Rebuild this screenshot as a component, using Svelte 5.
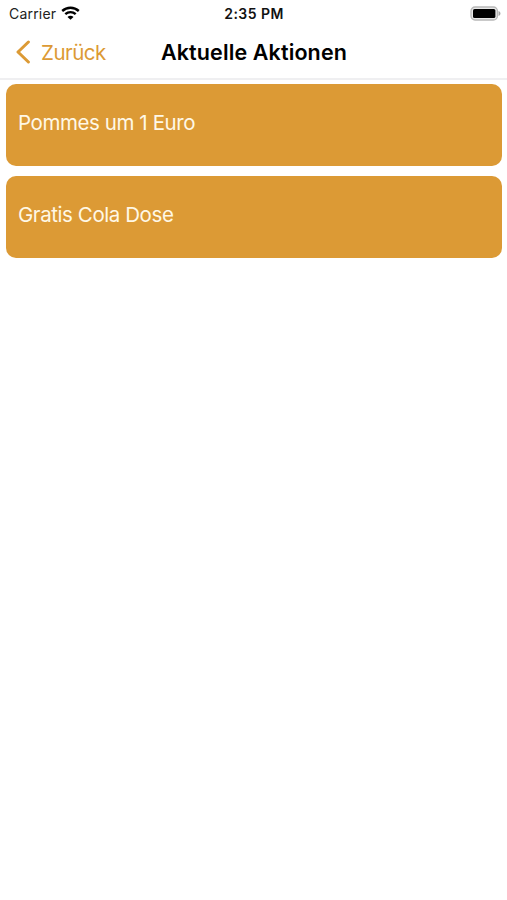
<script>
  export let title = 'Aktuelle Aktionen';
  export let backLabel = 'Zurück';

  let promotions = [
    { id: 1, name: 'Pommes um 1 Euro' },
    { id: 2, name: 'Gratis Cola Dose' }
  ];
</script>

<div class="screen">
  <div class="status-bar">
    <div class="carrier">
      <span>Carrier</span>
      <svg class="wifi" width="19" height="14" viewBox="0 0 19 14" aria-hidden="true">
        <path d="M1.2 5C5.9.7 13.1.7 17.8 5" />
        <path d="M4.3 8.1c3-2.7 7.4-2.7 10.4 0" />
        <path class="dot" d="M9.5 13.8 6.5 10.9c1.6-1.5 4.4-1.5 6 0z" />
      </svg>
    </div>
    <div class="time">2:35 PM</div>
    <svg class="battery" width="31" height="16" viewBox="0 0 31 16" aria-hidden="true">
      <rect x="1" y="1" width="26.4" height="13" rx="4" fill="#e8e8e8" stroke="#b8b8b8" stroke-width="1.3" />
      <rect x="3" y="3" width="22.4" height="9" rx="1.6" fill="#000" />
      <path d="M28.5 5c2.6 1 2.6 4 0 5z" fill="#a5a5a5" />
    </svg>
  </div>

  <header class="nav-bar">
    <button class="back">
      <svg width="16" height="24" viewBox="0 0 16 24" aria-hidden="true">
        <path d="M13.4 2 3 12l10.4 10" />
      </svg>
      <span>{backLabel}</span>
    </button>
    <h1>{title}</h1>
  </header>

  <main class="list">
    {#each promotions as promotion (promotion.id)}
      <div class="card">{promotion.name}</div>
    {/each}
  </main>
</div>

<style>
  :global(body) {
    margin: 0;
    background: #fff;
  }

  .screen {
    height: 900px;
    overflow: hidden;
    background: #fff;
    font-family: Inter, 'Liberation Sans', sans-serif;
    color: #000;
  }

  .status-bar {
    display: grid;
    grid-template-columns: 1fr auto 1fr;
    align-items: center;
    height: 27px;
    padding: 0 6px 0 9px;
  }

  .carrier {
    display: flex;
    align-items: center;
    gap: 5px;
    font-size: 14px;
    letter-spacing: 0.2px;
    color: #222;
  }

  .wifi {
    margin-top: -1px;
    fill: none;
    stroke: #000;
    stroke-width: 2.4;
  }

  .wifi .dot {
    fill: #000;
    stroke: none;
  }

  .time {
    margin-right: 2px;
    font-size: 14px;
    font-weight: 600;
    letter-spacing: 0.45px;
    color: #111;
  }

  .battery {
    justify-self: end;
  }

  .nav-bar {
    display: grid;
    grid-template-columns: 1fr auto 1fr;
    align-items: center;
    box-sizing: border-box;
    height: 53px;
    padding: 0 14px 2px 15px;
    border-bottom: 2px solid #efeff1;
  }

  .back {
    display: flex;
    align-items: center;
    gap: 10px;
    padding: 0;
    border: 0;
    background: none;
    font: inherit;
    font-size: 20.5px;
    line-height: 24px;
    letter-spacing: -0.5px;
    color: #dc9a35;
  }

  .back span {
    margin: 1px 0 -1px;
  }

  .back svg {
    fill: none;
    stroke: #dc9a35;
    stroke-width: 3;
    stroke-linecap: round;
    stroke-linejoin: round;
  }

  h1 {
    margin: 0;
    font-size: 21.5px;
    font-weight: 600;
    line-height: 26px;
    letter-spacing: 0.12px;
    white-space: nowrap;
  }

  .list {
    display: flex;
    flex-direction: column;
    gap: 10px;
    padding: 4px 5px 0 6px;
  }

  .card {
    box-sizing: border-box;
    height: 82px;
    padding: 26px 12px;
    border-radius: 10px;
    background: #dc9a35;
    color: #fff8e6;
    font-size: 20.5px;
    line-height: 26px;
    letter-spacing: -0.42px;
  }
</style>
